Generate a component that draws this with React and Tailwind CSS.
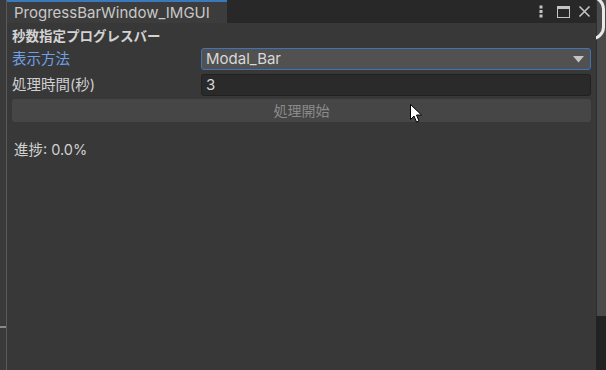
const font = { fontFamily: '"Inter", "Noto Sans CJK JP", sans-serif' };

const TabBar = () => (
  <div className="flex h-[23px] items-stretch bg-[#282828]">
    <div className="flex w-[220px] flex-col bg-[#3c3c3c]">
      <div className="h-[2px] bg-[#3a79bb]" />
      <div className="flex flex-1 items-center pl-[7px] text-[15px] leading-none text-[#c8c8c8]">
        ProgressBarWindow_IMGUI
      </div>
    </div>
    <div className="flex-1" />
    <div className="flex items-center gap-[6px] pr-[5px]">
      <svg width="4" height="13" viewBox="0 0 4 13" className="mr-[8px]">
        <rect x="0.5" y="0.5" width="3" height="3" fill="#c4c4c4" />
        <rect x="0.5" y="5" width="3" height="3" fill="#c4c4c4" />
        <rect x="0.5" y="9.5" width="3" height="3" fill="#c4c4c4" />
      </svg>
      <svg width="13" height="12" viewBox="0 0 13 12">
        <rect x="0.5" y="0.5" width="12" height="11" fill="none" stroke="#c4c4c4" />
        <rect x="0.5" y="0.5" width="12" height="2.5" fill="#c4c4c4" />
      </svg>
      <svg width="13" height="13" viewBox="0 0 13 13" className="ml-[2px]">
        <path d="M1.5 1.5 L11.5 11.5 M11.5 1.5 L1.5 11.5" stroke="#c4c4c4" strokeWidth="1.6" />
      </svg>
    </div>
  </div>
);

export default function App() {
  return (
    <div className="relative flex h-[370px] w-[606px] overflow-hidden bg-[#383838]" style={font}>
      <div className="flex w-[7px] flex-col border-r border-[#5a5a5a] bg-[#3a3a3a]">
        <div className="h-[326px]" />
        <div className="h-[2px] bg-[#8a8a8a]" />
      </div>

      <div className="flex w-[589px] flex-col">
        <TabBar />
        <div className="flex flex-col px-[5px] pt-[2px]">
          <div className="h-[22px] text-[13.5px] font-bold leading-[22px] text-[#d2d2d2]">秒数指定プログレスバー</div>

          <div className="mt-[1px] flex h-[22px] items-center">
            <div className="w-[189px] text-[14.5px] text-[#6f9fe4]">表示方法</div>
            <div className="flex h-[22px] flex-1 items-center justify-between rounded-[3px] border border-[#3f74b6] bg-[#515151] pl-[4px] pr-[6px]">
              <span className="text-[15px] text-[#d8d8d8]">Modal_Bar</span>
              <svg width="11" height="7" viewBox="0 0 11 7">
                <path d="M0 0 L11 0 L5.5 6.5 Z" fill="#c4c4c4" />
              </svg>
            </div>
          </div>

          <div className="mt-[4px] flex h-[22px] items-center">
            <div className="w-[189px] text-[14.5px] text-[#d0d0d0]">処理時間(秒)</div>
            <div className="flex h-[22px] flex-1 items-center rounded-[3px] border border-[#212121] bg-[#2a2a2a] pl-[4px]">
              <span className="text-[15px] text-[#d8d8d8]">3</span>
            </div>
          </div>

          <div className="mt-[3px] flex h-[23px] items-center justify-center rounded-[3px] bg-[#464646] text-[14px] text-[#8a8a8a]">
            処理開始
          </div>

          <div className="mt-[18px] pl-[2px] text-[14.5px] leading-[20px] text-[#d0d0d0]">進捗: 0.0%</div>
        </div>
      </div>

      <div className="relative flex w-[10px] flex-col overflow-hidden">
        <div className="h-[316px] border-l border-[#2e2e2e] bg-[#4a4a4a]" />
        <div className="flex-1 bg-[#222222]" />
        <div className="absolute left-[-17px] top-[-4px] h-[44px] w-[26px] rounded-full border-[3px] border-[#e8e8e8]" />
      </div>

      <svg className="absolute left-[410px] top-[104px]" width="13" height="20" viewBox="0 0 13 20">
        <path d="M0.5 0.5 L0.5 15.5 L4 12 L6.5 18 L9 17 L6.5 11 L11.5 11 Z" fill="#ffffff" stroke="#000000" strokeWidth="1" />
      </svg>
    </div>
  );
}
